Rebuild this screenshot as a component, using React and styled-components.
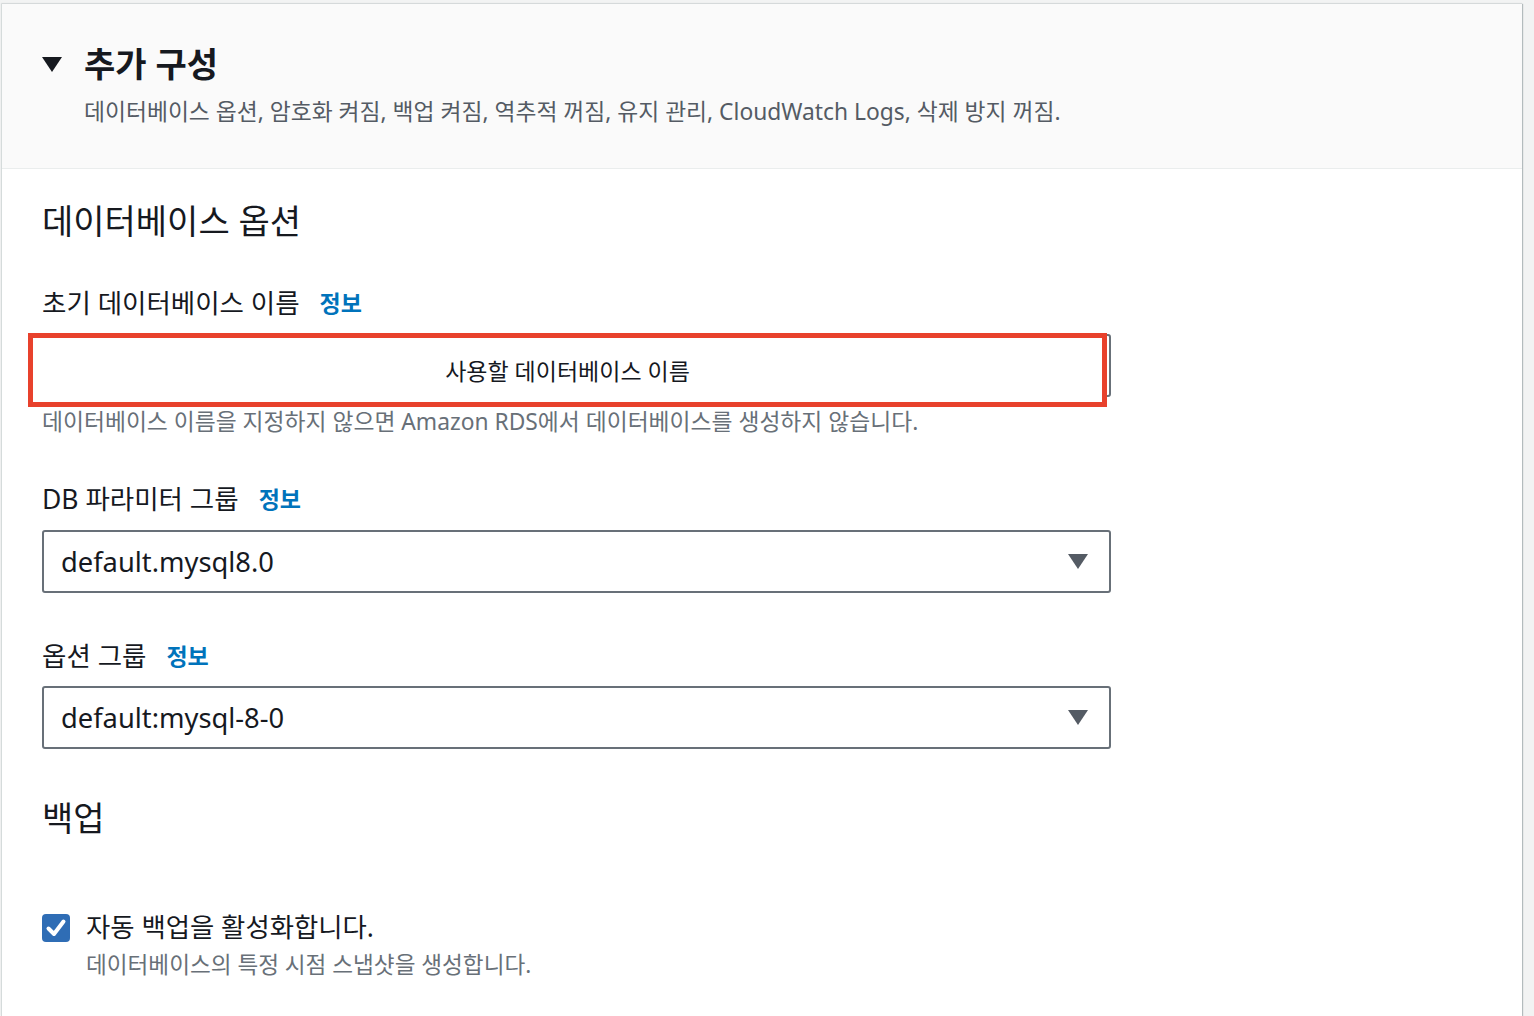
import React from "react";
import styled, { createGlobalStyle } from "styled-components";

const Global = createGlobalStyle`
  html, body { margin: 0; padding: 0; }
  body {
    background: #f2f3f3;
    font-family: "Noto Sans", "Noto Sans CJK KR", sans-serif;
    color: #16191f;
  }
`;

const Page = styled.div`
  padding: 4px 12px 0 1px;
  min-height: 1016px;
  box-sizing: border-box;
  display: flex;
`;

const Card = styled.section`
  flex: 1;
  background: #fff;
  border-left: 1px solid #d5dbdb;
  box-shadow: 1px 0 1px 0 rgba(0, 28, 36, 0.25), 0 -1px 1px 0 rgba(0, 28, 36, 0.08);
  display: flex;
  flex-direction: column;
`;

const Header = styled.header`
  background: #fafafa;
  border-bottom: 1px solid #eaeded;
  padding: 40px 40px 42px 40px;
  display: flex;
  flex-direction: column;
`;

const TitleRow = styled.div`
  display: flex;
  align-items: center;
  gap: 22px;
  height: 40px;
`;

const Caret = styled.span`
  width: 0;
  height: 0;
  border-left: ${(p) => p.$w / 2}px solid transparent;
  border-right: ${(p) => p.$w / 2}px solid transparent;
  border-top: ${(p) => p.$h}px solid ${(p) => p.$color};
  flex: none;
`;

const Title = styled.h2`
  margin: 0;
  font-size: 34px;
  line-height: 40px;
  height: 40px;
  font-weight: 700;
`;

const HeaderDesc = styled.p`
  margin: 14px 0 0 42px;
  font-size: 22.8px;
  line-height: 28px;
  height: 28px;
  color: #545b64;
  white-space: nowrap;
`;

const Body = styled.div`
  padding: 32px 40px 0 40px;
  display: flex;
  flex-direction: column;
`;

const SectionHeading = styled.h3`
  margin: ${(p) => p.$mt || 0}px 0 0 0;
  font-size: 34px;
  line-height: 40px;
  height: 40px;
  font-weight: 400;
`;

const Label = styled.div`
  margin-top: ${(p) => p.$mt}px;
  height: 30px;
  display: flex;
  align-items: center;
  gap: 20px;
  font-size: 26.5px;
  line-height: 30px;
`;

const InfoLink = styled.a`
  color: #0073bb;
  font-weight: 700;
  font-size: 23px;
  line-height: 30px;
  text-decoration: none;
`;

const FieldWrap = styled.div`
  position: relative;
  margin-top: ${(p) => p.$mt}px;
  width: 1069px;
`;

const Box = styled.div`
  height: 63px;
  box-sizing: border-box;
  border: 2px solid #687078;
  border-radius: 3px;
  background: #fff;
  display: flex;
  align-items: center;
  justify-content: space-between;
  padding: 0 21px 0 17px;
  font-size: 27.3px;
  color: #16191f;
`;

const Annotation = styled.div`
  position: absolute;
  left: -14px;
  top: -1px;
  right: 4px;
  bottom: -10px;
  border: 5px solid #e8412c;
  background: #fff;
  display: flex;
  align-items: center;
  justify-content: center;
  font-size: 23px;
  color: #16191f;
`;

const Helper = styled.p`
  margin: 11px 0 0 0;
  font-size: 22.8px;
  line-height: 28px;
  height: 28px;
  color: #687078;
  white-space: nowrap;
`;

const CheckRow = styled.label`
  margin-top: 72px;
  display: flex;
  align-items: flex-start;
  gap: 16px;
`;

const CheckBox = styled.span`
  width: 28px;
  height: 28px;
  margin-top: 4px;
  border-radius: 4px;
  background: #2f6db5;
  display: flex;
  align-items: center;
  justify-content: center;
  flex: none;
`;

const CheckText = styled.div`
  display: flex;
  flex-direction: column;
`;

const CheckLabel = styled.span`
  font-size: 26.4px;
  line-height: 34px;
  height: 34px;
`;

const CheckDesc = styled.span`
  margin-top: 7px;
  font-size: 22.6px;
  line-height: 28px;
  height: 28px;
  color: #687078;
`;

function Select({ value, mt }) {
  return (
    <FieldWrap $mt={mt}>
      <Box>
        <span>{value}</span>
        <Caret $w={21} $h={15} $color="#545b64" />
      </Box>
    </FieldWrap>
  );
}

export default function App() {
  return (
    <>
      <Global />
      <Page>
        <Card>
          <Header>
            <TitleRow>
              <Caret $w={20} $h={15} $color="#16191f" />
              <Title>추가 구성</Title>
            </TitleRow>
            <HeaderDesc>
              데이터베이스 옵션, 암호화 켜짐, 백업 켜짐, 역추적 꺼짐, 유지 관리, CloudWatch Logs, 삭제 방지 꺼짐.
            </HeaderDesc>
          </Header>
          <Body>
            <SectionHeading>데이터베이스 옵션</SectionHeading>
            <Label $mt={47}>
              초기 데이터베이스 이름 <InfoLink>정보</InfoLink>
            </Label>
            <FieldWrap $mt={16}>
              <Box />
              <Annotation>사용할 데이터베이스 이름</Annotation>
            </FieldWrap>
            <Helper>
              데이터베이스 이름을 지정하지 않으면 Amazon RDS에서 데이터베이스를 생성하지 않습니다.
            </Helper>
            <Label $mt={48}>
              DB 파라미터 그룹 <InfoLink>정보</InfoLink>
            </Label>
            <Select value="default.mysql8.0" mt={16} />
            <Label $mt={48}>
              옵션 그룹 <InfoLink>정보</InfoLink>
            </Label>
            <Select value="default:mysql-8-0" mt={15} />
            <SectionHeading $mt={49}>백업</SectionHeading>
            <CheckRow>
              <CheckBox>
                <svg width="24" height="24" viewBox="0 0 24 24">
                  <path d="M4.5 12.5 L10 18 L19.5 5.5" fill="none" stroke="#fff" strokeWidth="4" strokeLinecap="round" strokeLinejoin="round" />
                </svg>
              </CheckBox>
              <CheckText>
                <CheckLabel>자동 백업을 활성화합니다.</CheckLabel>
                <CheckDesc>데이터베이스의 특정 시점 스냅샷을 생성합니다.</CheckDesc>
              </CheckText>
            </CheckRow>
          </Body>
        </Card>
      </Page>
    </>
  );
}
